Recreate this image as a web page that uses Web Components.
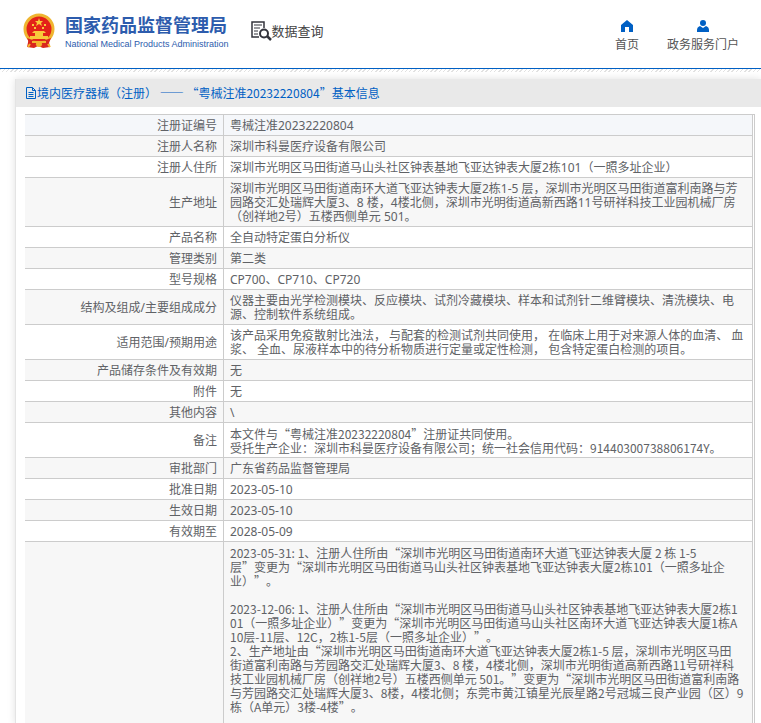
<!DOCTYPE html>
<html lang="zh-CN">
<head>
<meta charset="utf-8">
<title>国家药品监督管理局 数据查询</title>
<style>
  body {
    margin: 0;
    background: #fff;
    color: #606266;
    font: 12px/14px "Noto Sans", "Noto Sans CJK SC", sans-serif;
    text-spacing-trim: space-all;
  }
</style>
</head>
<body>
<site-header>
  <nav-link href="#home" icon="home">首页</nav-link>
  <nav-link href="#portal" icon="user">政务服务门户</nav-link>
</site-header>
<record-panel>
  <span slot="title">境内医疗器械（注册） —— “粤械注准20232220804”基本信息</span>
  <record-table></record-table>
</record-panel>

<script>
class NavLink extends HTMLElement {
  constructor() {
    super();
    this.attachShadow({ mode: 'open' });
  }

  connectedCallback() {
    const icons = {
      home: '<path d="M6 0 0 5v7h4V7h4v5h4V5z"/>',
      user: '<circle cx="6" cy="3" r="3"/><path d="M0 12V10q0-3 3-4l3 2 3-2q3 1 3 4v2z"/>'
    };
    this.shadowRoot.innerHTML = `
      <style>
        :host { display: block; }
        a {
          display: flex;
          flex-direction: column;
          align-items: center;
          gap: 6px;
          color: #555;
          text-decoration: none;
        }
        svg { fill: #0060c4; }
      </style>
      <a href="${this.getAttribute('href')}">
        <svg width="12" height="12" viewBox="0 0 12 12">${icons[this.getAttribute('icon')]}</svg>
        <slot></slot>
      </a>`;
  }
}

class SiteHeader extends HTMLElement {
  constructor() {
    super();
    this.attachShadow({ mode: 'open' });
    this.shadowRoot.innerHTML = `
      <style>
        :host { display: block; }
        header {
          display: flex;
          align-items: center;
          padding: 12px 22px;
          border-bottom: 1px solid #0060c4;
        }
        .stripe {
          height: 3px;
          background: repeating-linear-gradient(135deg, #e2e2e2 0 1px, #fff 1px 3px);
        }
        .brand { display: flex; align-items: center; gap: 10px; color: #2d5cad; text-decoration: none; }
        .name { font-size: 18px; line-height: 26px; font-weight: 700; }
        .en { font: 9px/12px "Liberation Sans", sans-serif; }
        .brand, .section { margin-bottom: 6px; }
        .section {
          display: flex;
          align-items: center;
          margin-left: 22px;
          color: #444;
          font-size: 13px;
          line-height: 18px;
        }
        nav { display: flex; gap: 28px; margin: 4px 0 0 auto; }
      </style>
      <header>
        <a class="brand" href="#">
          <svg width="33" height="36" viewBox="0 0 33 36">
            <path d="M7 25 5 34l7 1 4-2 5 2 7-1-2-9z" fill="#d9261c"/>
            <circle cx="17" cy="16" r="14" fill="#e32219" stroke="#efb530" stroke-width="3"/>
            <path d="m17 5 1 3h3l-2 2 1 3-3-2-3 2 1-3-2-2h3z" fill="#f8c93b"/>
            <path d="M10 11h2v2h-2zM22 11h2v2h-2zM12 14h2v2h-2zM20 14h2v2h-2zM12 18h10l2 2H10zM13 20h8v3h-8zM8 23h18v3H8z" fill="#f8c93b"/>
            <path d="M5 25q12 6 24 0l-2 5q-10 3-20 0z" fill="#d9261c"/>
            <path d="M10 29h14M8 31l-2 3M26 31l2 3" fill="none" stroke="#f3b52e" stroke-width="2"/>
            <circle cx="17" cy="31" r="3" fill="#f3b52e"/>
          </svg>
          <div>
            <div class="name">国家药品监督管理局</div>
            <div class="en">National Medical Products Administration</div>
          </div>
        </a>
        <div class="section">
          <svg width="21" height="20" viewBox="0 0 21 20" fill="none" stroke="#33343c">
            <path d="M13 7V1H1v15h7" stroke-width="1.5"/>
            <path d="M3 4h8M3 7h6M3 10h4M3 13h4" stroke-width="1"/>
            <circle cx="13" cy="12.500" r="4" stroke-width="2"/>
            <path d="m16 15 4 4" stroke-width="2.500"/>
          </svg>
          <span>数据查询</span>
        </div>
        <nav><slot></slot></nav>
      </header>
      <div class="stripe"></div>`;
  }
}

class RecordPanel extends HTMLElement {
  constructor() {
    super();
    this.attachShadow({ mode: 'open' });
    this.shadowRoot.innerHTML = `
      <style>
        :host {
          display: block;
          margin: 7px 0 0 15px;
          border-left: 1px solid #e4e4e4;
          box-shadow: 0 0 8px rgba(0, 0, 0, .12);
        }
        .bar {
          display: flex;
          align-items: center;
          height: 28px;
          padding-left: 9px;
          background: #e9e9e9;
          color: #0060c4;
          font-family: "Noto Sans CJK SC", sans-serif;
          white-space: nowrap;
        }
        .body { padding: 7px 6px 0 9px; }
      </style>
      <div class="bar">
        <svg width="12" height="12" viewBox="0 0 12 12" fill="none" stroke="currentColor">
          <path d="M1.500 .5h6l3 3v8h-9zM7.500 .5v3h3M3.500 5.500h5M3.500 7.500h5M3.500 9.500h5"/>
        </svg>
        <slot name="title"></slot>
      </div>
      <div class="body"><slot></slot></div>`;
  }
}

class RecordTable extends HTMLElement {
  constructor() {
    super();
    this.attachShadow({ mode: 'open' });
    this.rows = [
      ['注册证编号', '粤械注准20232220804'],
      ['注册人名称', '深圳市科曼医疗设备有限公司'],
      ['注册人住所', '深圳市光明区马田街道马山头社区钟表基地飞亚达钟表大厦2栋101（一照多址企业）'],
      ['生产地址', `深圳市光明区马田街道南环大道飞亚达钟表大厦2栋1-5 层，深圳市光明区马田街道富利南路与芳
园路交汇处瑞辉大厦3、8 楼，4楼北侧，深圳市光明街道高新西路11号研祥科技工业园机械厂房
（创祥地2号）五楼西侧单元 501。`],
      ['产品名称', '全自动特定蛋白分析仪'],
      ['管理类别', '第二类'],
      ['型号规格', 'CP700、CP710、CP720'],
      ['结构及组成/主要组成成分', `仪器主要由光学检测模块、反应模块、试剂冷藏模块、样本和试剂针二维臂模块、清洗模块、电
源、控制软件系统组成。`],
      ['适用范围/预期用途', `该产品采用免疫散射比浊法， 与配套的检测试剂共同使用， 在临床上用于对来源人体的血清、 血
浆、 全血、尿液样本中的待分析物质进行定量或定性检测， 包含特定蛋白检测的项目。`],
      ['产品储存条件及有效期', '无'],
      ['附件', '无'],
      ['其他内容', '\\'],
      ['备注', `本文件与“粤械注准20232220804”注册证共同使用。
受托生产企业：深圳市科曼医疗设备有限公司；统一社会信用代码：91440300738806174Y。`],
      ['审批部门', '广东省药品监督管理局'],
      ['批准日期', '2023-05-10'],
      ['生效日期', '2023-05-10'],
      ['有效期至', '2028-05-09'],
      ['', `2023-05-31: 1、注册人住所由“深圳市光明区马田街道南环大道飞亚达钟表大厦 2 栋 1-5
层”变更为“深圳市光明区马田街道马山头社区钟表基地飞亚达钟表大厦2栋101（一照多址企
业）”。

2023-12-06: 1、注册人住所由“深圳市光明区马田街道马山头社区钟表基地飞亚达钟表大厦2栋1
01（一照多址企业）”变更为“深圳市光明区马田街道马山头社区南环大道飞亚达钟表大厦1栋A
10层-11层、12C，2栋1-5层（一照多址企业）”。
2、生产地址由“深圳市光明区马田街道南环大道飞亚达钟表大厦2栋1-5 层，深圳市光明区马田
街道富利南路与芳园路交汇处瑞辉大厦3、8 楼，4楼北侧，深圳市光明街道高新西路11号研祥科
技工业园机械厂房（创祥地2号）五楼西侧单元 501。”变更为“深圳市光明区马田街道富利南路
与芳园路交汇处瑞辉大厦3、8楼，4楼北侧；东莞市黄江镇星光辰星路2号冠城三良产业园（区）9
栋（A单元）3楼-4楼”。`]
    ];
  }

  connectedCallback() {
    // quotes are only full width in the CJK face
    const body = this.rows.map(([label, value]) => `
      <tr>
        <th scope="row">${label}</th>
        <td class="${value.includes('“') ? 'quoted' : ''}">${value}</td>
      </tr>`).join('');
    this.shadowRoot.innerHTML = `
      <style>
        :host {
          display: block;
          border-top: 1px solid #ccc;
          border-right: 1px solid #ccc;
          padding-right: 1px;
        }
        table { width: 100%; border-collapse: separate; border-spacing: 0; table-layout: fixed; }
        col.label { width: 199px; }
        tr:nth-child(even) { background: #f7f7f7; }
        tr:first-child { background: #f5f7fa; }
        th, td {
          padding: 4px 6px 2px;
          border-right: 1px solid #ccc;
          border-bottom: 1px solid #ccc;
          font-weight: 400;
        }
        th { text-align: right; }
        td { text-align: left; white-space: pre-line; padding-right: 0; }
        .quoted { font-family: "Noto Sans CJK SC", sans-serif; }
        tr:last-child td { padding-bottom: 10px; border-bottom: 0; }
        tr:last-child th { border-bottom: 0; }
      </style>
      <table>
        <colgroup><col class="label"><col></colgroup>
        <tbody>${body}</tbody>
      </table>`;
  }
}

customElements.define('nav-link', NavLink);
customElements.define('site-header', SiteHeader);
customElements.define('record-panel', RecordPanel);
customElements.define('record-table', RecordTable);
</script>
</body>
</html>
